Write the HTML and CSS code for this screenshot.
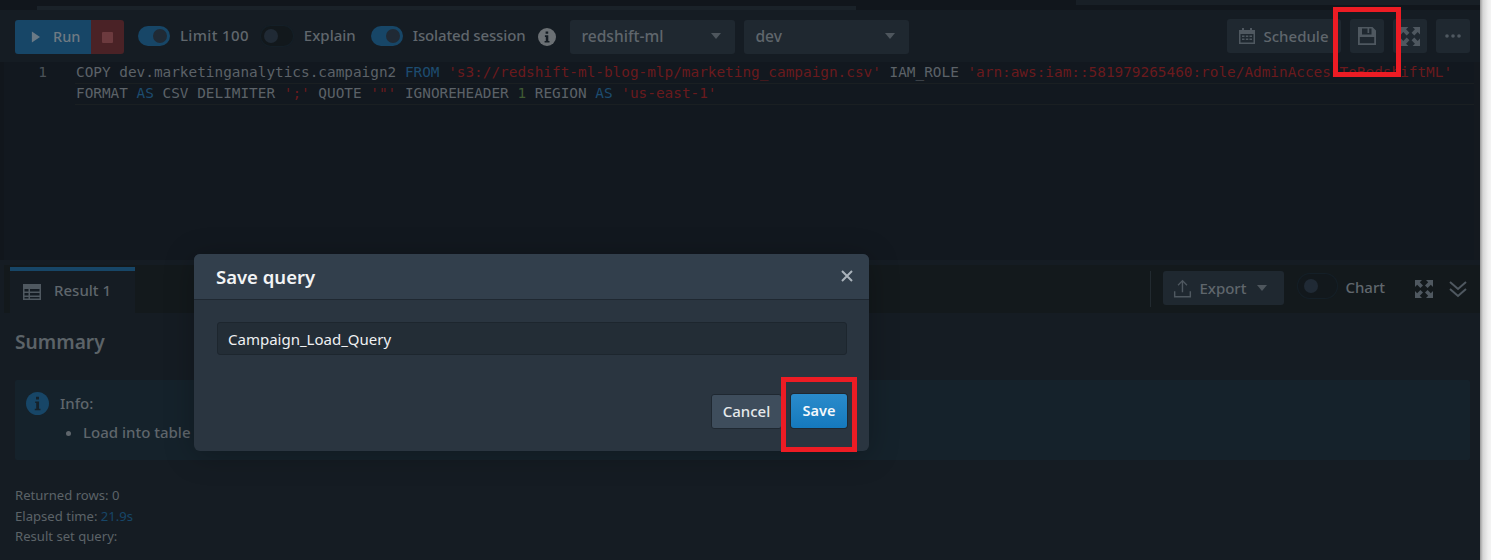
FILE: index.html
```html
<!DOCTYPE html>
<html lang="en">
<head>
<meta charset="utf-8">
<title>Save query</title>
<link rel="stylesheet" href="styles.css">
</head>
<body>
<div class="app">
  <main class="main">
    <div class="topstrip">
      <div class="topbar"></div>
      <div class="toppanel"></div>
    </div>
    <div class="toolbar">
      <div class="runsplit">
        <button class="run"><svg class="ico-play" viewBox="0 0 10 12"><path d="M1 0l9 6-9 6z"/></svg>Run</button>
        <button class="stop"><span class="stopsq"></span></button>
      </div>
      <span class="toggle on"><i></i></span><span class="tlabel lbl-limit">Limit 100</span>
      <span class="toggle off"><i></i></span><span class="tlabel lbl-explain">Explain</span>
      <span class="toggle on"><i></i></span><span class="tlabel lbl-iso">Isolated session</span>
      <svg class="ico-info" viewBox="0 0 18 18"><circle cx="9" cy="9" r="9"/><path class="cut" d="M7.600 3.400h2.600v2.400H7.600zM6.900 7.300h3.400v5.600h1.200v1.700H6.600v-1.700h1.200V9H6.900z"/></svg>
      <div class="select sel-cluster"><span>redshift-ml</span><b class="caret"></b></div>
      <div class="select sel-db"><span>dev</span><b class="caret"></b></div>
      <div class="toolright">
        <button class="tbtn schedule">
          <svg class="ico" viewBox="0 0 18 18"><path d="M1 3h3V1h2v2h6V1h2v2h3v14H1zM2.500 7v8.500h13V7zM4 8.500h2.500V10H4zM7.800 8.500h2.500V10H7.800zM11.500 8.500H14V10h-2.500zM4 11.500h2.500V13H4zM7.800 11.500h2.500V13H7.800zM11.500 11.500H14V13h-2.500z"/></svg><span class="schedtxt">Schedule</span>
        </button>
        <button class="tbtn square save-ico">
          <svg class="ico" viewBox="0 0 18 18"><path d="M0 0h14.500L18 3.500V18H0zM4 1.500V7.500h9.500V1.500h-2.300V6H9.500V1.500zM1.800 10v6.200h14.400V10z"/></svg>
        </button>
        <button class="tbtn square">
          <svg class="ico exp-lg" viewBox="0 0 18 18"><path d="M0 0h7L4.800 2.200 8 5.400 5.400 8 2.200 4.800 0 7zM18 0v7l-2.200-2.200L12.600 8 10 5.400l3.200-3.200L11 0zM0 18v-7l2.200 2.200L5.400 10 8 12.600l-3.200 3.200L7 18zM18 18h-7l2.200-2.200L10 12.600 12.600 10l3.200 3.200L18 11z"/></svg>
        </button>
        <button class="tbtn square">
          <svg class="ico" viewBox="0 0 18 18"><circle cx="3" cy="9" r="1.800"/><circle cx="9" cy="9" r="1.800"/><circle cx="15" cy="9" r="1.800"/></svg>
        </button>
      </div>
    </div>
    <div class="editor">
      <div class="gutter">1</div>
      <div class="code">
        <div class="cline">COPY dev.marketinganalytics.campaign2 <span class="kw">FROM</span> <span class="str">'s3://redshift-ml-blog-mlp/marketing_campaign.csv'</span> IAM_ROLE <span class="str">'arn:aws:iam::581979265460:role/AdminAccessToRedshiftML'</span></div>
        <div class="cline active">FORMAT <span class="kw">AS</span> CSV DELIMITER <span class="str">';'</span> QUOTE <span class="str">'"'</span> IGNOREHEADER <span class="num">1</span> REGION <span class="kw">AS</span> <span class="str">'us-east-1'</span></div>
      </div>
    </div>
    <div class="resultbar">
      <div class="tab">
        <svg class="ico-table" viewBox="0 0 18 16"><path d="M0 0h18v16H0zM1.500 5v2.500h4V5zM7 5v2.500h9.500V5zM1.500 9v2.500h4V9zM7 9v2.500h9.500V9zM1.500 13v1.500h4V13zM7 13v1.500h9.500V13z"/></svg><span>Result 1</span>
      </div>
      <div class="resright">
        <span class="vsep"></span>
        <button class="export">
          <svg class="ico-up" viewBox="0 0 20 20"><path d="M9.200 3.500L5.800 7 4.800 6 10 .8 15.200 6l-1 1-3.500-3.500V14H9.200zM1 13h1.500v5h15v-5H19v6.500H1z"/></svg>Export<b class="caret"></b>
        </button>
        <span class="toggle off chart-t"><i></i></span><span class="tlabel">Chart</span>
        <svg class="ico res-exp" viewBox="0 0 18 18"><path d="M0 0h7L4.800 2.200 8 5.400 5.400 8 2.200 4.800 0 7zM18 0v7l-2.200-2.200L12.600 8 10 5.400l3.200-3.200L11 0zM0 18v-7l2.200 2.200L5.400 10 8 12.600l-3.200 3.200L7 18zM18 18h-7l2.200-2.200L10 12.600 12.600 10l3.200 3.200L18 11z"/></svg>
        <svg class="ico-chev" viewBox="0 0 18 18"><path d="M1 2l8 7 8-7M1 9l8 7 8-7"/></svg>
      </div>
    </div>
    <section class="summary">
      <h2>Summary</h2>
      <div class="infobox">
        <svg class="ico-infobl" viewBox="0 0 22 22"><circle cx="11" cy="11" r="11"/><path class="cut" d="M9.600 4.500h2.800v2.600H9.600zM8.800 9h3.700v7h1.300v1.500H8.400V16h1.400v-5.500h-1z"/></svg>
        <div class="infotext">
          <div class="infohead">Info:</div>
          <ul><li>Load into table 'campaign2' completed</li></ul>
        </div>
      </div>
      <div class="meta">
        <div>Returned rows: 0</div>
        <div>Elapsed time: <span class="link">21.9s</span></div>
        <div>Result set query:</div>
      </div>
    </section>
  </main>
  <aside class="edge"></aside>
</div>

<div class="modal">
  <header class="mhead">
    <h3>Save query</h3>
    <svg class="mclose" viewBox="0 0 12 12"><path d="M1 1l10 10M11 1L1 11"/></svg>
  </header>
  <div class="mbody">
    <input class="minput" type="text" value="Campaign_Load_Query">
  </div>
  <footer class="mfoot">
    <button class="btn-cancel">Cancel</button>
    <button class="btn-save">Save</button>
  </footer>
</div>

<div class="redbox rb-top"></div>
<div class="redbox rb-save"></div>
</body>
</html>
```
FILE: styles.css
```css
* { box-sizing: border-box; }
html, body { margin: 0; height: 100%; overflow: hidden; background: #151c23; }
body { font-family: "Noto Sans", "Open Sans", sans-serif; color: #5f666c; font-size: 15px; }
button { font-family: inherit; border: 0; padding: 0; }

.app { display: flex; height: 560px; }
.main { width: 1480px; flex: none; display: flex; flex-direction: column; background: #151c23; }
.edge { flex: 1; background: linear-gradient(90deg, #9a9a9a 0, #d6d6d6 3px, #eeeeee 8px, #f4f4f4 100%); }

.topstrip { height: 10px; background: #11161c; display: flex; justify-content: space-between; align-items: flex-start; }
.topbar { margin: 6px 0 0 37px; width: 819px; height: 4px; background: #1a2229; }
.toppanel { width: 404px; height: 5px; background: #181f26; }

.toolbar { height: 52px; padding: 10px 10px 0 15px; display: flex; align-items: flex-start; }
.runsplit { display: flex; height: 34px; }
.run { width: 76px; height: 34px; background: #174667; color: #6f7a83; font-size: 14.500px; font-weight: 500; border-radius: 3px 0 0 3px; display: flex; align-items: center; padding: 0 0 3px 16px; gap: 13px; }
.ico-play { width: 9px; height: 12px; fill: #6a7a86; margin-top: 3px; }
.stop { width: 33px; height: 34px; background: #4a2226; border-radius: 0 3px 3px 0; display: flex; align-items: center; justify-content: center; }
.stopsq { width: 11px; height: 11px; background: #6c3a3e; border-radius: 1px; }

.toggle { width: 32px; height: 20px; border-radius: 10px; flex: none; display: flex; align-items: center; margin-top: 6px; padding: 0 3px; }
.toggle i { width: 14px; height: 14px; border-radius: 50%; display: block; background: #202a35; }
.toggle.on { background: #174667; justify-content: flex-end; }
.toggle.off { background: #12181c; box-shadow: 0 0 0 1px #141f27; }
.runsplit + .toggle { margin-left: 14px; }
.tlabel { font-size: 15px; font-weight: 500; color: #60676d; margin-top: 4px; line-height: 22px; white-space: nowrap; }
.lbl-limit { margin-left: 10px; margin-right: 12px; letter-spacing: .35px; }
.lbl-explain { margin-left: 11px; margin-right: 15px; }
.lbl-iso { margin-left: 10px; letter-spacing: -0.15px; }
.ico-info { width: 18px; height: 18px; fill: #6b7074; margin: 8px 0 0 13px; flex: none; }
.ico-info .cut { fill: #151c23; }

.select { height: 34px; background: #1f2830; border-radius: 3px; display: flex; align-items: center; justify-content: space-between; padding: 0 14px 2px 11px; color: #5f666c; font-size: 15.600px; font-weight: 500; flex: none; }
.sel-cluster { width: 165px; margin-left: 14px; }
.sel-db { width: 165px; margin-left: 9px; }
.caret { width: 0; height: 0; border-left: 5px solid transparent; border-right: 5px solid transparent; border-top: 6px solid #4e565d; display: block; }

.toolright { margin-left: auto; display: flex; gap: 9px; margin-top: -1px; }
.tbtn { height: 34px; background: #1f2830; color: #5f666c; border-radius: 3px; display: flex; align-items: center; justify-content: center; font-size: 15px; font-weight: 500; }
.schedule { width: 114px; gap: 8px; white-space: nowrap; padding-right: 2px; }
.schedtxt { margin-bottom: 1px; }
.square { width: 34px; }
.ico { width: 18px; height: 18px; fill: #4f5860; flex: none; }
.exp-lg { width: 19px; height: 19px; }

.editor { height: 198px; background: #12181f; display: flex; border-left: 4px solid #11161c; border-right: 6px solid #14191f; }
.gutter { width: 56px; padding-right: 13px; text-align: right; font: 14.4px/21px "DejaVu Sans Mono", monospace; color: #4a5157; }
.code { flex: 1; padding-left: 16px; font: 14.390px/21px "DejaVu Sans Mono", monospace; color: #5c6268; white-space: nowrap; }
.cline { height: 21px; }
.cline.active { border-top: 1px solid #1a1f22; border-bottom: 1px solid #1a1f22; margin-left: -1px; padding-left: 1px; line-height: 19px; height: 22px; }
.kw { color: #1d4c70; }
.str { color: #6a1a1d; }
.num { color: #3f5a33; }

.resultbar { height: 48px; margin-top: 5px; background: #13191c; display: flex; justify-content: space-between; margin-left: 4px; }
.tab { margin-left: 6px; width: 125px; height: 47px; border-top: 4px solid #174667; background: #151c23; display: flex; align-items: center; padding-left: 13px; gap: 13px; font-size: 15px; font-weight: 500; color: #5f666c; margin-top: 2px; }
.tab span { margin-bottom: 5px; }
.ico-table { width: 18px; height: 16px; fill: #4f5860; margin-bottom: 2px; }
.resright { display: flex; align-items: center; height: 48px; padding-right: 12px; }
.vsep { width: 1px; height: 36px; background: #222a30; margin-right: 12px; }
.export { width: 121px; height: 34px; margin-top: -2px; background: #1f2830; border-radius: 3px; color: #5f666c; font-size: 15px; font-weight: 500; display: flex; align-items: center; padding-left: 10px; gap: 7px; }
.export .caret { margin-left: 4px; }
.ico-up { width: 19px; height: 19px; fill: #4f5860; }
.chart-t { margin: -6px 0 0 14px; width: 39px; height: 24px; border-radius: 12px; padding: 0 6px; background: #12181c; box-shadow: 0 0 0 1px #17242c; }
.resright .tlabel { margin: -5px 0 0 8px; }
.res-exp { margin: 0 0 0 30px; }
.ico-chev { width: 18px; height: 18px; fill: none; stroke: #4f5860; stroke-width: 2; margin-left: 16px; }
.resright { padding-right: 13px; }

.summary { flex: 1; padding: 0 10px 0 15px; }
.summary h2 { margin: 14px 0 0; font-size: 19.200px; line-height: 30px; font-weight: 600; color: #5c6368; }
.infobox { margin-top: 23px; height: 80px; background: #15222b; border-radius: 2px; display: flex; padding: 12px 0 0 11px; gap: 11px; }
.ico-infobl { width: 23px; height: 23px; fill: #174667; flex: none; }
.ico-infobl .cut { fill: #15222b; }
.infotext { font-size: 15px; font-weight: 500; color: #5f666c; }
.infohead { line-height: 22px; }
.infotext ul { margin: 7px 0 0; padding: 0 0 0 23px; line-height: 22px; white-space: nowrap; }
.meta { margin-top: 25px; font-size: 13.100px; line-height: 20.500px; color: #5c6368; }
.link { color: #174667; }

.modal { position: absolute; left: 194px; top: 254px; width: 675px; height: 197px; background: #2a3540; border-radius: 6px; display: flex; flex-direction: column; box-shadow: 0 4px 30px rgba(0,0,0,.25); }
.mhead { height: 46px; background: #323f4c; border-radius: 6px 6px 0 0; border-bottom: 1px solid #1f2831; display: flex; align-items: center; justify-content: space-between; padding: 0 16px 0 22px; }
.mhead h3 { margin: 0; font-size: 18.500px; font-weight: 600; color: #f2f4f5; line-height: 24px; padding-top: 1px; }
.mclose { width: 12px; height: 12px; fill: none; stroke: #aab3bb; stroke-width: 2; margin-top: -2px; }
.mbody { padding: 22px 22px 0 23px; }
.minput { display: block; width: 630px; height: 33px; background: #232d36; border: 1px solid #1d262e; border-radius: 3px; color: #eef0f2; font: 400 15px "Noto Sans", sans-serif; padding: 0 10px; outline: 0; }
.mfoot { margin-top: 39px; display: flex; justify-content: flex-end; padding-right: 22px; gap: 9px; }
.btn-cancel { width: 71px; height: 35px; background: #3e4d5c; border: 1px solid #1f2831; border-radius: 3px; color: #e6e9ec; font-size: 15px; font-weight: 500; padding-bottom: 2px; }
.btn-save { width: 56px; height: 34px; background: linear-gradient(#2a8bcb, #1579bd); border-radius: 3px; color: #f5f8fb; font-size: 14.500px; font-weight: 600; box-shadow: 0 0 0 1px #1f2831; padding-bottom: 2px; }

.redbox { position: absolute; border: 5px solid #ed1c24; }
.rb-top { left: 1333px; top: 7px; width: 68px; height: 70px; }
.rb-save { left: 781px; top: 377px; width: 76px; height: 75px; }
```
